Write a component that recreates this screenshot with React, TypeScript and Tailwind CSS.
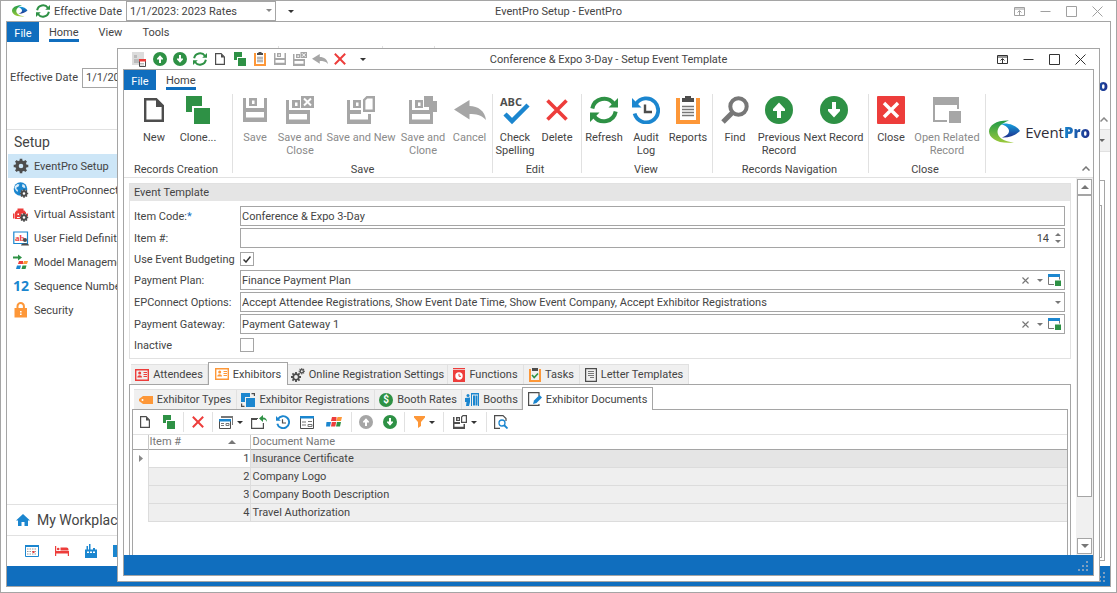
import type { ReactNode } from "react";

import clsx from "clsx";

const GREEN = "#2e9145";
const BLUE = "#1b86cf";
const RED = "#ed3d3b";
const ORANGE = "#fd9738";
const DARK = "#4d4d4d";
const GREY = "#a6a6a6";

type IconProps = { className?: string; color?: string };

function Svg({ box, className, children }: { box: string; className?: string; children: ReactNode }) {
  return (
    <svg viewBox={box} className={clsx("shrink-0", className)} fill="none" aria-hidden="true">
      {children}
    </svg>
  );
}

/* ---------- icons ---------- */

function PageIcon({ className = "h-6 w-5" }: IconProps) {
  return (
    <Svg box="0 0 20 24" className={className}>
      <path d="M1.2 1.2h11l6.6 6.6v15H1.2z" stroke={DARK} strokeWidth="2.4" />
      <path d="M12 1v8h7z" fill={DARK} />
    </Svg>
  );
}

function CloneIcon({ className = "h-7 w-6" }: IconProps) {
  return (
    <Svg box="0 0 24 28" className={className}>
      <path d="M0 0h16v10H6v6H0z" fill={GREEN} />
      <path d="M8 12h16v16H8z" fill={GREEN} />
    </Svg>
  );
}

function DiskIcon({ className = "size-6", color = GREY }: IconProps) {
  return (
    <Svg box="0 0 24 24" className={className}>
      <path d="M0 0h3v10h18V0h3v24H0zM6 0h8v8H6z" fill={color} />
      <path d="M3 14h18v5.500H3zM9 2.500h2.500V6H9z" fill="#fff" />
    </Svg>
  );
}

function DiskCloseIcon({ className = "size-7", color = GREY }: IconProps) {
  return (
    <Svg box="0 0 28 28" className={className}>
      <path d="M0 4h3v10h21v14H0zM6 4h8v8H6zM15 0h13v12H15z" fill={color} />
      <path d="M3 18h18v5.500H3zM9 6.500h2.500V10H9z" fill="#fff" />
      <path d="M18 2.500l7 7M25 2.500l-7 7" stroke="#fff" strokeWidth="2" />
    </Svg>
  );
}

function DiskNewIcon({ className = "size-7", color = GREY }: IconProps) {
  return (
    <Svg box="0 0 28 28" className={className}>
      <path d="M0 4h3v10h11v4h10v10H0zM6 4h8v8H6z" fill={color} />
      <path d="M3 18h18v5.500H3zM9 6.500h2.500V10H9z" fill="#fff" />
      <path d="M20 1.200h6.800v13.600h-9.600V4z" fill="#fff" stroke={color} strokeWidth="2.400" />
    </Svg>
  );
}

function DiskCloneIcon({ className = "size-7", color = GREY }: IconProps) {
  return (
    <Svg box="0 0 28 28" className={className}>
      <path d="M0 4h3v10h21v14H0zM6 4h8v8H6zM15 0h9v5h5v11H20v-5h-5z" fill={color} />
      <path d="M3 18h18v5.500H3zM9 6.500h2.500V10H9z" fill="#fff" />
    </Svg>
  );
}

function UndoIcon({ className = "h-5 w-8" }: IconProps) {
  return (
    <Svg box="0 0 32 20" className={className}>
      <path d="M0 9.500L15.500 0v6C24 6 31 11 32 20c-5-5.500-10-6-16.500-6v5.500z" fill={GREY} />
    </Svg>
  );
}

function SpellIcon() {
  return (
    <Svg box="0 0 30 28" className="h-7 w-[30px] overflow-visible">
      <text x="0" y="10" fontSize="11" fontWeight="700" fontFamily="Open Sans, sans-serif" fill={DARK}>
        ABC
      </text>
      <path d="M5 18l7 7L28 9" stroke={BLUE} strokeWidth="4.500" />
    </Svg>
  );
}

function CrossIcon({ className = "size-[22px]", color = RED }: IconProps) {
  return (
    <Svg box="0 0 22 22" className={className}>
      <path d="M1.500 1.500l19 19M20.500 1.500l-19 19" stroke={color} strokeWidth="3.600" />
    </Svg>
  );
}

function RefreshIcon({ className = "size-7" }: IconProps) {
  return (
    <Svg box="0 0 28 28" className={className}>
      <path d="M2.300 12.500A12 12 0 0 1 24 8M25.700 15.500A12 12 0 0 1 4 20" stroke={GREEN} strokeWidth="4" />
      <path d="M28 2v9.500h-9.500zM0 26v-9.500h9.500z" fill={GREEN} />
    </Svg>
  );
}

function HistoryIcon({ className = "size-7" }: IconProps) {
  return (
    <Svg box="0 0 28 28" className={className}>
      <path d="M4 8A12 12 0 1 1 2.600 17.500" stroke={BLUE} strokeWidth="3.800" />
      <path d="M0 2v9.500h9.500z" fill={BLUE} />
      <path d="M13 8.500V16h7" stroke={DARK} strokeWidth="2.400" />
    </Svg>
  );
}

function ClipboardIcon({ className = "h-7 w-6" }: IconProps) {
  return (
    <Svg box="0 0 24 28" className={className}>
      <path d="M0 2h4v22h16V2h4v26H0z" fill={ORANGE} />
      <path d="M6 6V2h3V0h6v2h3v4z" fill={DARK} />
      <path d="M6 10.500h12M6 13.500h12M6 16.500h12M6 19.500h12" stroke="#777" strokeWidth="1.400" />
    </Svg>
  );
}

function FindIcon() {
  return (
    <Svg box="0 0 28 28" className="size-7">
      <circle cx="17.500" cy="10.500" r="8.200" stroke="#777" strokeWidth="4" />
      <path d="M11.500 16.500L2 26" stroke="#777" strokeWidth="5" />
    </Svg>
  );
}

function ArrowIcon({ className = "size-7", color = GREEN, down }: IconProps & { down?: boolean }) {
  return (
    <Svg box="0 0 28 28" className={className}>
      <circle cx="14" cy="14" r="14" fill={color} />
      {down ? (
        <path d="M14 21.500L20 15v-2h-4V6h-4v7H8v2z" fill="#fff" />
      ) : (
        <path d="M14 6.500L20 13v2h-4v7h-4v-7H8v-2z" fill="#fff" />
      )}
    </Svg>
  );
}

function CloseBoxIcon() {
  return (
    <Svg box="0 0 28 28" className="size-7">
      <rect width="28" height="28" rx="1" fill={RED} />
      <path d="M7 7l14 14M21 7L7 21" stroke="#fff" strokeWidth="3.400" />
    </Svg>
  );
}

function RelatedIcon() {
  return (
    <Svg box="0 0 28 26" className="h-[26px] w-7">
      <path d="M0 0h26v12h-2V8H2v15h12v2H0z" fill={GREY} />
      <rect x="16" y="14" width="12" height="12" fill={GREY} />
    </Svg>
  );
}

function Caret({ color = "#666" }: { color?: string }) {
  return (
    <Svg box="0 0 6 3" className="h-[3px] w-1.5">
      <path d="M0 0h6L3 3z" fill={color} />
    </Svg>
  );
}

function Gear({ className = "size-4" }: IconProps) {
  return (
    <Svg box="-8 -8 16 16" className={className}>
      <circle r="4" stroke={DARK} strokeWidth="3.400" />
      {[0, 45, 90, 135].map((deg) => (
        <path key={deg} d="M-1.300-7.300h2.600v3h-2.600zM-1.300 4.300h2.600v3h-2.600z" transform={`rotate(${deg})`} fill={DARK} />
      ))}
    </Svg>
  );
}

const miniGear = (
  <g transform="translate(11 11.500)">
    <circle r="3.400" fill="#fff" />
    <circle r="2.300" stroke={DARK} strokeWidth="2" />
    {[0, 45, 90, 135].map((deg) => (
      <path key={deg} d="M-.8-4.200h1.600v2h-1.600zM-.8 2.200h1.600v2h-1.600z" transform={`rotate(${deg})`} fill={DARK} />
    ))}
  </g>
);

function GlobeIcon() {
  return (
    <Svg box="0 0 16 16" className="size-4">
      <circle cx="7.500" cy="7" r="6.800" fill={BLUE} />
      <path d="M2 4l2.500-2 2 .5-1 2-2 1v1.500l1.500 1-.5 2L3 8.500 1.500 6zM9.500 2l2 1 1 2.500-1.500.5-2-1.500z" fill="#d9ecfa" />
      {miniGear}
    </Svg>
  );
}

function RobotIcon() {
  return (
    <Svg box="0 0 16 16" className="size-4">
      <path d="M2 6.500l1.500-2h8l1.500 2V13H2zM0 7.500h1.500v5H0zM4.500 2.500h6v3h-6zM13.500 7.500H15v3h-1.500z" fill={RED} />
      <path d="M4.500 7.500h1.500V9H4.500zM8.500 7.500H10V9H8.500zM4 11h4v1H4z" fill="#fff" />
      {miniGear}
    </Svg>
  );
}

function FieldIcon() {
  return (
    <Svg box="0 0 16 16" className="size-4">
      <path d="M.8 2h13.700v11.500H.8z" stroke={BLUE} strokeWidth="1.200" />
      <text x="2" y="10.500" fontSize="9" fontWeight="700" fontFamily="Liberation Serif, serif" fill={RED}>
        ab
      </text>
      <circle cx="12" cy="10" r="2" fill={DARK} />
      <path d="M8 15.500c0-3 8-3 8 0z" fill={DARK} />
    </Svg>
  );
}

function ModelIcon() {
  return (
    <Svg box="0 0 16 16" className="size-4">
      <path d="M0 2.500h5V.5l4 3-4 3v-2H0z" fill={GREEN} />
      <path d="M6 7h4v3H5z" fill={RED} />
      <path d="M11 7h4l-1 3h-4z" fill={ORANGE} />
      <path d="M4 11.500h4L7 15H3z" fill={BLUE} />
      <path d="M9.500 11.500h4l-1 3.500h-4z" fill={GREEN} />
    </Svg>
  );
}

function NumberIcon() {
  return (
    <span aria-hidden="true" className="w-4 text-center font-['Open_Sans',sans-serif] text-sm leading-4 font-bold text-[#1b86cf]">
      12
    </span>
  );
}

function LockIcon() {
  return (
    <Svg box="0 0 16 16" className="size-4">
      <path d="M4.500 7V4.200a3.200 3.200 0 0 1 6.400 0V7" stroke={ORANGE} strokeWidth="2" />
      <path d="M1.500 6h12.500v9.500H1.500z" fill={ORANGE} />
      <path d="M7 9h1.600v1.500H7zM7 11.500h1.600V13H7z" fill="#fff" />
    </Svg>
  );
}

function HomeIcon() {
  return (
    <Svg box="0 0 14 12" className="h-3 w-3.5">
      <path d="M7 0l7 6.500h-2V12H8.500V8h-3v4H2V6.500H0z" fill={BLUE} />
    </Svg>
  );
}

function CalendarIcon() {
  return (
    <Svg box="0 0 14 12" className="h-3 w-3.5">
      <path d="M.5.500h13v11H.5z" stroke={BLUE} />
      <path d="M0 0h14v2H0z" fill={BLUE} />
      <path d="M2 4h10M2 6.500h10M2 9h10" stroke="#999" strokeDasharray="1.500 1" />
      <path d="M7.500 6h2v2h-2z" fill={RED} />
    </Svg>
  );
}

function BedIcon() {
  return (
    <Svg box="0 0 14 10" className="h-2.5 w-3.5">
      <path d="M0 0h1.200v5H14v5h-1.200V7.500H1.200V10H0z" fill={RED} />
      <path d="M5.500 1.500h6a2 2 0 0 1 2 2v1h-8z" fill={RED} />
      <circle cx="3.200" cy="3" r="1.300" fill={RED} />
    </Svg>
  );
}

function FactoryIcon() {
  return (
    <Svg box="0 0 12 14" className="h-3.5 w-3">
      <path d="M0 5.500h1.500V2h1.500v3.500h1V0h1.500v5.500H8V4h2v1.500h2V14H0z" fill={BLUE} />
      <path d="M2 7.500h2V9H2zM5 7.500h2V9H5zM8 7.500h2V9H8z" fill="#fff" />
    </Svg>
  );
}

function CardIcon({ color }: { color: string }) {
  return (
    <Svg box="0 0 14 12" className="h-3 w-3.5">
      <path d="M.7.700h12.600v10.600H.7z" stroke={color} strokeWidth="1.400" />
      <circle cx="4.700" cy="4" r="1.500" fill={color} />
      <path d="M2.300 8.500C2.300 5.500 7 5.500 7 8.500z" fill={color} />
      <path d="M8.500 3.500H12M8.500 5.500H12M8.500 7.500H12" stroke={color} />
    </Svg>
  );
}

function GearsIcon() {
  return (
    <Svg box="0 0 14 14" className="size-3.5">
      <g transform="translate(5 9)">
        <circle r="2.800" stroke={DARK} strokeWidth="1.800" />
        {[0, 45, 90, 135].map((deg) => (
          <path key={deg} d="M-.9-5h1.800v2h-1.800zM-.9 3h1.800v2h-1.800z" transform={`rotate(${deg})`} fill={DARK} />
        ))}
      </g>
      <g transform="translate(10.800 3.200)">
        <circle r="1.600" stroke={DARK} strokeWidth="1.200" />
        {[0, 45, 90, 135].map((deg) => (
          <path key={deg} d="M-.5-3.200h1v1.400h-1zM-.5 1.800h1v1.400h-1z" transform={`rotate(${deg})`} fill={DARK} />
        ))}
      </g>
    </Svg>
  );
}

function FunctionsIcon() {
  return (
    <Svg box="0 0 12 14" className="h-3.5 w-3">
      <path d="M0 2h12v12H0zM0 0h12v1.200H0z" fill={RED} />
      <circle cx="6" cy="8" r="3.700" fill="#fff" />
      <path d="M6 5.800V8.300h2" stroke={RED} />
    </Svg>
  );
}

function TasksIcon() {
  return (
    <Svg box="0 0 12 14" className="h-3.5 w-3">
      <path d="M0 1h2v11h8V1h2v13H0z" fill={ORANGE} />
      <path d="M3 0h6v3H3z" fill={DARK} />
      <path d="M3 7l2.200 2.500L9 5.500" stroke={GREEN} strokeWidth="1.600" />
    </Svg>
  );
}

function LetterIcon() {
  return (
    <Svg box="0 0 12 14" className="h-3.5 w-3">
      <path d="M.6.600h10.800v12.800H.6z" stroke={DARK} strokeWidth="1.200" />
      <path d="M3 3.500h6M3 5.500h6M3 7.500h6M5 9.500h4" stroke="#777" />
    </Svg>
  );
}

function TagIcon() {
  return (
    <Svg box="0 0 14 8" className="h-2 w-3.5">
      <path d="M4 0h10v8H4L0 5V3z" fill={ORANGE} />
      <circle cx="3.500" cy="4" r="1" fill="#fff" />
    </Svg>
  );
}

function RegistrationsIcon() {
  return (
    <Svg box="0 0 14 14" className="size-3.5">
      <path d="M0 0h9v4H4v5H0z" fill={BLUE} />
      <path d="M5 5h9v9H5z" fill={BLUE} />
      <path d="M10.500.6h2.900V3M.6 10.500v2.900H3.500" stroke={DARK} strokeWidth="1.200" />
    </Svg>
  );
}

function MoneyIcon() {
  return (
    <span aria-hidden="true" className="flex size-3.5 items-center justify-center rounded-full bg-[#2e9145] text-[10px] leading-none font-bold text-white">
      $
    </span>
  );
}

function BoothIcon() {
  return (
    <Svg box="0 0 14 14" className="size-3.5">
      <path d="M6 0h8v1.500H6zM8 2.500h2v10H8zM10.500 2.500h2v10h-2zM13 1h1v12h-1zM6 1h1v12H6z" fill={BLUE} />
      <circle cx="3" cy="2.500" r="1.500" fill={BLUE} />
      <path d="M0 5l5-.5V9L4 13H1l.5-4H0z" fill={BLUE} />
    </Svg>
  );
}

function EditDocIcon() {
  return (
    <Svg box="0 0 14 14" className="size-3.5">
      <path d="M11 4V.6H.6v12.800H11V12" stroke={DARK} strokeWidth="1.200" />
      <path d="M5 12l1-3.500L11.500 3 14 5.500 8.500 11z" fill={BLUE} />
    </Svg>
  );
}

function FormIcon({ stacked }: { stacked?: boolean }) {
  return (
    <Svg box="0 0 14 13" className="h-[13px] w-3.5">
      {stacked && <path d="M2 0h12v9h-1V2H2z" fill="#777" />}
      <path d={stacked ? "M.5 3.500h11v9H.5z" : "M.5.500h13v12H.5z"} stroke={DARK} />
      <path d={stacked ? "M0 3h12v2.500H0z" : "M0 0h14v2.500H0z"} fill={BLUE} />
      <path d={stacked ? "M2 7.500h3M2 9.500h3M7 7.500h3v2H7z" : "M2 6h4M2 9h4M8 5.500h4M8 8.500h4v2H8z"} stroke="#777" />
    </Svg>
  );
}

function ShareIcon() {
  return (
    <Svg box="0 0 16 14" className="h-3.5 w-4">
      <path d="M7 3.500H.6v9.900h11.800V8" stroke={DARK} strokeWidth="1.200" />
      <path d="M0 3h6v2H0z" fill={DARK} />
      <path d="M16 7c-1-2-2-2.500-4-2.500V7L8 3.500 12 0v2.500c2.500 0 4 1.500 4 4.500z" fill={GREEN} />
    </Svg>
  );
}

function BlocksIcon() {
  return (
    <Svg box="0 0 16 10" className="h-2.5 w-4">
      <path d="M6 0h4.500v4H5z" fill={RED} />
      <path d="M11.500 0H16l-1 4h-4.500z" fill={ORANGE} />
      <path d="M.5 5H5l-1 4.500H0z" fill={BLUE} />
      <path d="M5.800 5h4.400l-1 4.500H5z" fill={RED} />
      <path d="M11 5h4l-1 4.500h-4z" fill={GREEN} />
    </Svg>
  );
}

function FunnelIcon() {
  return (
    <Svg box="0 0 11 12" className="h-3 w-[11px]">
      <path d="M0 0h11v1.500L7 6v4l-3 2V6L0 1.500z" fill={ORANGE} />
    </Svg>
  );
}

function PreviewIcon() {
  return (
    <Svg box="0 0 14 14" className="size-3.5">
      <path d="M12 6V3.500L9 .6H.6v12.800H6" stroke={DARK} strokeWidth="1.200" />
      <circle cx="8" cy="8" r="3" stroke={BLUE} strokeWidth="1.300" />
      <path d="M10 10l3.500 3.500" stroke={BLUE} strokeWidth="1.800" />
    </Svg>
  );
}

function OpenRecordIcon() {
  return (
    <Svg box="0 0 13 12" className="h-3 w-[13px]">
      <path d="M.5.500h11v10H.5z" stroke="#777" />
      <path d="M0 0h12v3H0z" fill={BLUE} />
      <path d="M6 5.500h7V12H6z" fill="#fff" />
      <path d="M7 6.500h6V12H7z" fill={GREEN} />
    </Svg>
  );
}

function RecordIcon() {
  return (
    <Svg box="0 0 14 15" className="h-[15px] w-3.5">
      <path d="M0 0h12v13H0z" fill="#dcdcdc" />
      <path d="M2 3h3v3H2zM2 7h6v4H2z" fill="#bbb" />
      <path d="M7.500 8.500h6v6h-6z" fill="#fff" stroke={DARK} />
      <path d="M7 7h7v2.500H7z" fill={RED} />
      <path d="M8.500 11.500h4M8.500 13h4" stroke="#777" strokeDasharray="1 1" />
    </Svg>
  );
}

function Swoosh({ className = "h-6 w-8" }: IconProps) {
  return (
    <Svg box="0 0 32 24" className={className}>
      <defs>
        <linearGradient id="leaf" x1="0" y1="0" x2="0" y2="1">
          <stop offset="0" stopColor="#1f9a48" />
          <stop offset="1" stopColor="#9cc93a" />
        </linearGradient>
        <linearGradient id="wave" x1="0" y1="0" x2="0" y2="1">
          <stop offset="0" stopColor="#15a3e0" />
          <stop offset="1" stopColor="#1d2f8c" />
        </linearGradient>
      </defs>
      <path d="M20 .500C8 0 0 5 0 11.500S9 24.500 25 22.500C15 22 8.500 17 8.500 12S13 3 20 .500z" fill="url(#leaf)" />
      <path d="M11 4c9-2 17 2 20 7-4 4-11 7-18 6.500 5-2 7-4 7-6.500S17 5 11 4z" fill="url(#wave)" />
    </Svg>
  );
}

function Logo() {
  return (
    <div className="flex items-center gap-1">
      <Swoosh />
      <span className="font-['Open_Sans',sans-serif] text-[15px] leading-5 font-medium text-[#2f2d3a]">
        Event
        <span className="bg-linear-to-r from-[#1583cb] to-[#1d2f8c] bg-clip-text font-extrabold text-transparent">Pro</span>
      </span>
    </div>
  );
}

/* ---------- window chrome ---------- */

function WindowButtons({ muted }: { muted?: boolean }) {
  const items = [
    { label: "Full screen", d: "M.5 1.500h10v8H.5zM.5 3h10M5.500 9V5M3.500 6.500l2-2 2 2" },
    { label: "Minimize", d: "M.5 5.500h10" },
    { label: "Maximize", d: "M.5.500h10v10H.5z" },
    { label: "Close window", d: "M.5.500l10 10M10.500.500l-10 10" },
  ];
  return (
    <div className={clsx("flex justify-end pr-px", muted ? "text-[#a0a0a0]" : "text-[#333]")}>
      {items.map((item) => (
        <button key={item.label} aria-label={item.label} className="flex h-5 w-[26px] items-center justify-center">
          <Svg box="0 0 11 11" className="size-[11px]">
            <path d={item.d} stroke="currentColor" />
          </Svg>
        </button>
      ))}
    </div>
  );
}

function RibbonTabs({ tabs }: { tabs: string[] }) {
  return (
    <div role="tablist" className="flex h-5">
      <button className="mr-2.5 w-8 bg-[#106ebe] pt-0.5 text-white">File</button>
      <div className="flex gap-5">
        {tabs.map((tab, i) => (
          <button
            key={tab}
            role="tab"
            aria-selected={i === 0}
            className={clsx("border-b-[3px] pt-[3px]", i === 0 ? "border-[#106ebe]" : "border-transparent")}
          >
            {tab}
          </button>
        ))}
      </div>
    </div>
  );
}

/* ---------- background window ---------- */

const navItems = [
  { label: "EventPro Setup", icon: <Gear /> },
  { label: "EventProConnect", icon: <GlobeIcon /> },
  { label: "Virtual Assistant S", icon: <RobotIcon /> },
  { label: "User Field Definiti", icon: <FieldIcon /> },
  { label: "Model Manageme", icon: <ModelIcon /> },
  { label: "Sequence Numbe", icon: <NumberIcon /> },
  { label: "Security", icon: <LockIcon /> },
];

function Sidebar() {
  return (
    <nav className="flex w-[200px] flex-col border-r border-[#e1e1e1]">
      <h2 className="flex h-6 items-center pl-[7px] text-sm">Setup</h2>
      <ul className="flex-1 pl-px">
        {navItems.map((item, i) => (
          <li key={item.label}>
            <a
              href={`#nav-${i}`}
              className={clsx("flex h-6 items-center gap-[5px] pl-[5px] whitespace-nowrap", i === 0 && "bg-[#cde6f7]")}
            >
              {item.icon}
              {item.label}
            </a>
          </li>
        ))}
      </ul>
      <a
        href="#workplace"
        className="flex h-[31px] items-center gap-[7px] border-t border-[#e1e1e1] pl-[9px] text-sm whitespace-nowrap"
      >
        <HomeIcon />
        My Workplac
      </a>
      <div className="flex h-[31px] items-center gap-4 border-t border-[#e1e1e1] pl-[18px]">
        <CalendarIcon />
        <BedIcon />
        <FactoryIcon />
        <span className="h-3 w-3.5 bg-[#1b86cf]" />
      </div>
    </nav>
  );
}

function ResizeGrip() {
  return (
    <Svg box="0 0 10 10" className="size-2.5">
      <path d="M8 0h2v2H8zM8 4h2v2H8zM8 8h2v2H8zM4 4h2v2H4zM4 8h2v2H4zM0 8h2v2H0z" fill="#7f9fc0" />
    </Svg>
  );
}

function StatusBar() {
  return (
    <footer className="flex h-5 shrink-0 items-end justify-end bg-[#106ebe] pr-[5px] pb-1">
      <ResizeGrip />
    </footer>
  );
}

function MainWindow() {
  return (
    <div className="flex h-full flex-col border border-[#a5a5a5] px-[5px] pb-[5px]">
      <header className="grid h-5 grid-cols-[1fr_auto_1fr] items-center">
        <div className="flex items-center pl-1.5">
          <Swoosh className="h-3 w-4" />
          <button aria-label="Refresh" className="ml-2">
            <RefreshIcon className="size-3.5" />
          </button>
          <label htmlFor="effective" className="ml-1">
            Effective Date
          </label>
          <span className="relative ml-1">
            <select id="effective" className="block h-5 w-[150px] appearance-none border border-[#a5a5a5] bg-white pl-[3px]">
              <option>1/1/2023: 2023 Rates</option>
            </select>
            <span className="pointer-events-none absolute top-2 right-1">
              <Caret color="#888" />
            </span>
          </span>
          <button aria-label="Customize toolbar" className="ml-3">
            <Caret color="#333" />
          </button>
        </div>
        <h1>EventPro Setup - EventPro</h1>
        <WindowButtons muted />
      </header>

      <div className="flex min-h-0 flex-1 flex-col border border-[#a5a5a5]">
        <RibbonTabs tabs={["Home", "View", "Tools"]} />
        <div className="flex h-[88px] border-b border-[#e1e1e1] pt-1">
          <div className="flex w-[272px] items-center gap-1 border-r border-[#e1e1e1] pb-5 pl-[3px]">
            <label htmlFor="effective-ribbon" className="whitespace-nowrap">
              Effective Date
            </label>
            <select id="effective-ribbon" className="h-5 w-[150px] appearance-none border border-[#a5a5a5] bg-white pl-[3px]">
              <option>1/1/20</option>
            </select>
          </div>
          <div className="w-[104px] border-r border-[#e1e1e1]" />
          <div className="w-[52px] border-r border-[#e1e1e1]" />
          <div className="flex flex-1 flex-col items-end justify-end gap-5 pr-0.5 pb-[6px]">
            <Logo />
            <Svg box="0 0 8 5" className="mb-px h-[5px] w-2">
              <path d="M.5 4.500L4 1l3.500 3.500" stroke="#888" strokeWidth="1.500" />
            </Svg>
          </div>
        </div>
        <div className="flex min-h-0 flex-1">
          <Sidebar />
          <div className="flex flex-1 flex-col">
            <div className="flex h-[22px] items-center justify-end border-b border-[#e1e1e1] bg-[#f0f0f0] pr-[5px]">
              <Caret />
            </div>
            <div className="mx-[5px] mt-7 mb-[5px] flex-1 border border-[#a5a5a5] px-0.5 pt-6 pb-0.5">
              <div className="h-full border border-[#a5a5a5]" />
            </div>
          </div>
        </div>
        <StatusBar />
      </div>
    </div>
  );
}

/* ---------- template dialog ---------- */

const quickAccess = [
  { label: "Previous", icon: <ArrowIcon className="size-3.5" /> },
  { label: "Next", icon: <ArrowIcon down className="size-3.5" /> },
  { label: "Refresh", icon: <RefreshIcon className="size-3.5" /> },
  { label: "New", icon: <PageIcon className="h-3 w-2.5" /> },
  { label: "Clone", icon: <CloneIcon className="h-3.5 w-3" /> },
  { label: "Reports", icon: <ClipboardIcon className="h-3.5 w-3" /> },
  { label: "Save", icon: <DiskIcon className="size-3" /> },
  { label: "Save and Close", icon: <DiskCloseIcon className="size-3.5" /> },
  { label: "Undo", icon: <UndoIcon className="h-2.5 w-4" /> },
  { label: "Delete", icon: <CrossIcon className="size-3" /> },
];

type RibbonItem = { label: string; icon: ReactNode; width: string; disabled?: boolean };

const ribbonGroups: { title: string; className?: string; items: RibbonItem[] }[] = [
  {
    title: "Records Creation",
    className: "pl-2 pr-3",
    items: [
      { label: "New", icon: <PageIcon />, width: "w-11" },
      { label: "Clone...", icon: <CloneIcon />, width: "w-11" },
    ],
  },
  {
    title: "Save",
    items: [
      { label: "Save", icon: <DiskIcon />, width: "w-11", disabled: true },
      { label: "Save and Close", icon: <DiskCloseIcon />, width: "w-[46px]", disabled: true },
      { label: "Save and New", icon: <DiskNewIcon />, width: "w-[76px]", disabled: true },
      { label: "Save and Clone", icon: <DiskCloneIcon />, width: "w-12", disabled: true },
      { label: "Cancel", icon: <UndoIcon />, width: "w-[45px]", disabled: true },
    ],
  },
  {
    title: "Edit",
    className: "pr-1",
    items: [
      { label: "Check Spelling", icon: <SpellIcon />, width: "w-11" },
      { label: "Delete", icon: <CrossIcon />, width: "w-10" },
    ],
  },
  {
    title: "View",
    className: "pr-0.5",
    items: [
      { label: "Refresh", icon: <RefreshIcon />, width: "w-11" },
      { label: "Audit Log", icon: <HistoryIcon />, width: "w-10" },
      { label: "Reports", icon: <ClipboardIcon />, width: "w-11" },
    ],
  },
  {
    title: "Records Navigation",
    className: "pr-0.5",
    items: [
      { label: "Find", icon: <FindIcon />, width: "w-11" },
      { label: "Previous Record", icon: <ArrowIcon />, width: "w-11" },
      { label: "Next Record", icon: <ArrowIcon down />, width: "w-[65px]" },
    ],
  },
  {
    title: "Close",
    className: "pr-1",
    items: [
      { label: "Close", icon: <CloseBoxIcon />, width: "w-11" },
      { label: "Open Related Record", icon: <RelatedIcon />, width: "w-[68px]", disabled: true },
    ],
  },
];

function Ribbon() {
  return (
    <div className="flex border-b border-[#e1e1e1] pt-1 pb-1">
      {ribbonGroups.map((group) => (
        <section key={group.title} className={clsx("flex h-[79px] flex-col border-r border-[#e1e1e1]", group.className)}>
          <div className="flex flex-1">
            {group.items.map((item) => (
              <button
                key={item.label}
                disabled={item.disabled}
                className={clsx(
                  "flex flex-col items-center text-center leading-[13px]",
                  item.width,
                  item.disabled && "text-[#8a8a8a]",
                )}
              >
                <span className="flex h-8 items-center">{item.icon}</span>
                <span className="mt-[5px]">{item.label}</span>
              </button>
            ))}
          </div>
          <h3 className="-mb-[3px] text-center leading-[13px] whitespace-nowrap">{group.title}</h3>
        </section>
      ))}
      <div className="flex flex-1 flex-col items-end pr-[3px] pb-0.5">
        <div className="flex flex-1 items-center pt-1">
          <Logo />
        </div>
        <button aria-label="Collapse ribbon" className="flex">
          <Svg box="0 0 8 5" className="h-[5px] w-2">
            <path d="M.5 4.500L4 1l3.500 3.500" stroke="#777" strokeWidth="1.500" />
          </Svg>
        </button>
      </div>
    </div>
  );
}

function Lookup({ id, value, full }: { id: string; value: string; full?: boolean }) {
  return (
    <div className="flex h-5 items-center border border-[#a5a5a5] pr-[3px]">
      <select id={id} className="h-full min-w-0 flex-1 appearance-none bg-white pl-px">
        <option>{value}</option>
      </select>
      {full && (
        <button aria-label={`Clear ${id}`} className="mr-2">
          <CrossIcon className="size-[7px]" color="#777" />
        </button>
      )}
      <Caret color="#777" />
      {full && (
        <button aria-label={`Open ${id}`} className="ml-[5px]">
          <OpenRecordIcon />
        </button>
      )}
    </div>
  );
}

function CheckBox({ id, checked }: { id: string; checked?: boolean }) {
  return (
    <span className="relative flex h-[18px] items-center">
      <input
        id={id}
        type="checkbox"
        defaultChecked={checked}
        className="peer size-3.5 appearance-none border border-[#a5a5a5] bg-white"
      />
      <span className="pointer-events-none absolute left-[3px] hidden peer-checked:block">
        <Svg box="0 0 8 7" className="h-[7px] w-2">
          <path d="M.5 3.500L3 6l4.500-5.500" stroke="#333" strokeWidth="1.500" />
        </Svg>
      </span>
    </span>
  );
}

function TemplateForm() {
  return (
    <section className="border border-[#e1e1e1]">
      <h2 className="flex h-[17px] items-center bg-[#e5e5e5] pl-1">Event Template</h2>
      <div className="grid grid-cols-[106px_1fr] items-center gap-y-0.5 pt-[5px] pr-[5px] pb-1 pl-1">
        <label htmlFor="item-code">
          Item Code:<span className="text-[#106ebe]">*</span>
        </label>
        <input id="item-code" defaultValue="Conference & Expo 3-Day" className="h-5 border border-[#a5a5a5] px-px" />

        <label htmlFor="item-number">Item #:</label>
        <div className="flex h-5 items-center border border-[#a5a5a5] pr-[3px]">
          <input id="item-number" defaultValue="14" className="min-w-0 flex-1 pr-1.5 text-right" />
          <span className="flex flex-col gap-1">
            <button aria-label="Increase" className="rotate-180">
              <Caret color="#777" />
            </button>
            <button aria-label="Decrease">
              <Caret color="#777" />
            </button>
          </span>
        </div>

        <label htmlFor="budgeting" className="whitespace-nowrap">
          Use Event Budgeting
        </label>
        <CheckBox id="budgeting" checked />

        <label htmlFor="payment-plan">Payment Plan:</label>
        <Lookup id="payment-plan" value="Finance Payment Plan" full />

        <label htmlFor="connect-options" className="whitespace-nowrap">
          EPConnect Options:
        </label>
        <Lookup
          id="connect-options"
          value="Accept Attendee Registrations, Show Event Date Time, Show Event Company, Accept Exhibitor Registrations"
        />

        <label htmlFor="gateway">Payment Gateway:</label>
        <Lookup id="gateway" value="Payment Gateway 1" full />

        <label htmlFor="inactive">Inactive</label>
        <CheckBox id="inactive" />
      </div>
    </section>
  );
}

type Tab = { label: string; icon: ReactNode; width: string };

const outerTabs: Tab[] = [
  { label: "Attendees", icon: <CardIcon color={RED} />, width: "w-[77px]" },
  { label: "Exhibitors", icon: <CardIcon color={ORANGE} />, width: "w-20" },
  { label: "Online Registration Settings", icon: <GearsIcon />, width: "w-40" },
  { label: "Functions", icon: <FunctionsIcon />, width: "w-[76px]" },
  { label: "Tasks", icon: <TasksIcon />, width: "w-14" },
  { label: "Letter Templates", icon: <LetterIcon />, width: "w-[109px]" },
];

const innerTabs: Tab[] = [
  { label: "Exhibitor Types", icon: <TagIcon />, width: "w-[103px]" },
  { label: "Exhibitor Registrations", icon: <RegistrationsIcon />, width: "w-[138px]" },
  { label: "Booth Rates", icon: <MoneyIcon />, width: "w-[87px]" },
  { label: "Booths", icon: <BoothIcon />, width: "w-[60px]" },
  { label: "Exhibitor Documents", icon: <EditDocIcon />, width: "w-[131px]" },
];

function TabStrip({ tabs, active }: { tabs: Tab[]; active: number }) {
  return (
    <div role="tablist" className="-mb-px flex items-end pl-0.5">
      {tabs.map((tab, i) => (
        <button
          key={tab.label}
          role="tab"
          aria-selected={i === active}
          className={clsx(
            "flex items-center justify-center gap-1 whitespace-nowrap",
            tab.width,
            i === active
              ? "relative h-[23px] border border-b-0 border-[#a5a5a5] bg-white"
              : "mb-px h-5 border-t border-r border-[#e1e1e1] bg-[#f0f0f0]",
          )}
        >
          {tab.icon}
          {tab.label}
        </button>
      ))}
    </div>
  );
}

type Tool = { label: string; icon: ReactNode; caret?: boolean; width?: string } | null;

const tools: Tool[] = [
  { label: "New document", icon: <PageIcon className="h-3 w-2.5" /> },
  { label: "Clone document", icon: <CloneIcon className="h-3.5 w-3" /> },
  null,
  { label: "Delete document", icon: <CrossIcon className="size-3" /> },
  null,
  { label: "Views", icon: <FormIcon stacked />, caret: true, width: "w-8" },
  { label: "Export", icon: <ShareIcon /> },
  { label: "History", icon: <HistoryIcon className="size-3.5" /> },
  { label: "Layout", icon: <FormIcon /> },
  { label: "Organize", icon: <BlocksIcon />, width: "w-[30px]" },
  null,
  { label: "Move up", icon: <ArrowIcon className="size-3.5" color={GREY} /> },
  { label: "Move down", icon: <ArrowIcon down className="size-3.5" /> },
  null,
  { label: "Filter", icon: <FunnelIcon />, caret: true, width: "w-[34px]" },
  null,
  { label: "Save as", icon: <DiskNewIcon className="size-3.5" color={DARK} />, caret: true, width: "w-[38px]" },
  null,
  { label: "Preview", icon: <PreviewIcon /> },
];

function Toolbar() {
  return (
    <div role="toolbar" aria-label="Documents" className="flex h-[25px] items-center border-b border-[#e1e1e1]">
      {tools.map((tool, i) =>
        tool ? (
          <button
            key={i}
            aria-label={tool.label}
            className={clsx("flex h-5 items-center justify-center gap-1", tool.width ?? "w-6")}
          >
            {tool.icon}
            {tool.caret && <Caret color="#333" />}
          </button>
        ) : (
          <span key={i} className="mx-0.5 h-5 w-px bg-[#e1e1e1]" />
        ),
      )}
    </div>
  );
}

const documents = ["Insurance Certificate", "Company Logo", "Company Booth Description", "Travel Authorization"];

function DocumentsTable() {
  return (
    <table className="w-full table-fixed border-collapse text-left">
      <colgroup>
        <col className="w-[15px]" />
        <col className="w-[102px]" />
        <col />
      </colgroup>
      <thead>
        <tr className="h-3.5 border-b border-[#a5a5a5] leading-[13px] text-[#777]">
          <th aria-label="Current row" className="border-r border-[#c8c8c8]" />
          <th className="border-r border-[#c8c8c8] pl-px font-normal">
            <span className="flex items-center justify-between pr-3.5">
              Item #
              <Svg box="0 0 8 4" className="h-1 w-2">
                <path d="M0 4h8L4 0z" fill="#777" />
              </Svg>
            </span>
          </th>
          <th className="pl-0.5 font-normal">Document Name</th>
        </tr>
      </thead>
      <tbody>
        {documents.map((name, i) => (
          <tr key={name} className="h-[18px] leading-[17px]">
            <td className="border-r border-[#dcdcdc]">
              {i === 0 && (
                <Svg box="0 0 4 7" className="ml-1.5 h-[7px] w-1">
                  <path d="M0 0v7l4-3.500z" fill="#888" />
                </Svg>
              )}
            </td>
            <td className={clsx("border-r border-b border-[#dcdcdc] text-right", i > 0 && "bg-[#efefef]")}>{i + 1}</td>
            <td className={clsx("border-b border-[#dcdcdc] pl-0.5", i > 0 ? "bg-[#efefef]" : "bg-[#e5e5e5]")}>{name}</td>
          </tr>
        ))}
      </tbody>
    </table>
  );
}

function ScrollBar() {
  return (
    <div className="flex w-[17px] flex-col bg-[#f0f0f0] p-px" aria-hidden="true">
      <div className="flex h-4 shrink-0 items-center justify-center border border-[#a5a5a5] bg-white">
        <Svg box="0 0 8 4" className="h-1 w-2">
          <path d="M0 4h8L4 0z" fill="#777" />
        </Svg>
      </div>
      <div className="min-h-0 flex-1">
        <div className="h-[88%] border border-[#a5a5a5] bg-white" />
      </div>
      <div className="flex h-4 shrink-0 items-center justify-center border border-[#a5a5a5] bg-white">
        <Svg box="0 0 8 4" className="h-1 w-2">
          <path d="M0 0h8L4 4z" fill="#777" />
        </Svg>
      </div>
    </div>
  );
}

function TemplateDialog() {
  return (
    <div
      role="dialog"
      aria-label="Setup Event Template"
      className="absolute top-12 right-[17px] bottom-[11px] left-[117px] flex flex-col border border-[#a5a5a5] bg-white px-[5px] pb-[5px]"
    >
      <header className="grid h-5 shrink-0 grid-cols-[1fr_auto_1fr] items-center">
        <div className="flex items-center pl-[9px]">
          <RecordIcon />
          <div className="ml-1 flex">
            {quickAccess.map((item) => (
              <button key={item.label} aria-label={item.label} className="flex size-5 items-center justify-center">
                {item.icon}
              </button>
            ))}
          </div>
          <button aria-label="Customize toolbar" className="ml-2.5">
            <Caret color="#333" />
          </button>
        </div>
        <h2>Conference &amp; Expo 3-Day - Setup Event Template</h2>
        <WindowButtons />
      </header>

      <div className="flex min-h-0 flex-1 flex-col border border-[#a5a5a5]">
        <RibbonTabs tabs={["Home"]} />
        <Ribbon />
        <div className="flex min-h-0 flex-1">
          <main className="flex min-w-0 flex-1 flex-col pt-[5px] pr-[5px] pl-[5px]">
            <TemplateForm />
            <div className="mt-[3px]">
              <TabStrip tabs={outerTabs} active={1} />
            </div>
            <div className="flex min-h-0 flex-1 flex-col border border-b-0 border-[#a5a5a5] px-0.5 pt-0.5">
              <TabStrip tabs={innerTabs} active={4} />
              <div className="min-h-0 flex-1 border border-b-0 border-[#a5a5a5]">
                <Toolbar />
                <DocumentsTable />
              </div>
            </div>
          </main>
          <ScrollBar />
        </div>
        <StatusBar />
      </div>
    </div>
  );
}

export default function App() {
  return (
    <div className="relative h-screen overflow-hidden bg-white font-['Roboto','Liberation_Sans',sans-serif] text-[11px] leading-[15px] text-[#444]">
      <MainWindow />
      <TemplateDialog />
    </div>
  );
}
